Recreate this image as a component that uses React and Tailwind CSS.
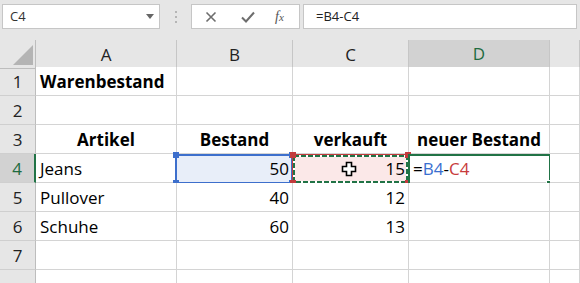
import React from 'react'

const COLS = ['A', 'B', 'C', 'D', '']
const GRID = 'grid grid-cols-[36px_141px_116px_116px_141px_30px]'

function Corner({ className }) {
  return <span className={`absolute w-[6px] h-[6px] ${className}`} />
}

function BodyCell({ children, className = '', align = 'left', bold = false }) {
  const alignCls = align === 'right' ? 'justify-end pr-[3px]' : align === 'center' ? 'justify-center' : 'justify-start pl-[4px]'
  return (
    <div className={`relative h-[29px] border-r border-b border-[#d4d4d4] flex items-end pb-[3px] leading-[20px] ${alignCls} ${bold ? 'font-bold' : ''} ${className}`}>
      {children}
    </div>
  )
}

function RowHead({ n, active }) {
  return (
    <div
      className={`h-[29px] flex items-end justify-center pb-[3px] leading-[20px] border-b border-[#cfcfcf] ${
        active ? 'bg-[#d2d2d2] text-[#1e6b3f] border-r-2 border-r-[#217346]' : 'bg-[#e6e6e6] text-[#222] border-r border-r-[#bdbdbd]'
      }`}
    >
      {n}
    </div>
  )
}

function Cursor() {
  return (
    <svg className="absolute left-[48px] top-[7px]" width="16" height="16" viewBox="0 0 16 16">
      <path d="M5.5 1.5h5v4h4v5h-4v4h-5v-4h-4v-5h4z" fill="#fff" stroke="#000" strokeWidth="1.6" />
    </svg>
  )
}

// row 8 only peeks in at the bottom edge, its number is hidden
const rows = [
  { n: 1, a: 'Warenbestand', aBold: true },
  { n: 2 },
  { n: 3, a: 'Artikel', b: 'Bestand', c: 'verkauft', d: 'neuer Bestand', header: true },
  { n: 4, a: 'Jeans', b: '50', c: '15', active: true },
  { n: 5, a: 'Pullover', b: '40', c: '12' },
  { n: 6, a: 'Schuhe', b: '60', c: '13' },
  { n: 7 },
  { n: 8, hideNum: true },
]

export default function App() {
  return (
    <div className="w-[580px] h-[283px] overflow-hidden bg-[#e6e6e6] text-[17px] text-black" style={{ fontFamily: '"Open Sans", "Noto Sans", sans-serif' }}>
      {/* Formula bar */}
      <div className="h-[40px] flex items-start pt-[4px]">
        <div className="ml-[2px] w-[158px] h-[25px] bg-white border border-[#c6c6c6] flex items-center justify-between pl-[7px] pr-[5px] text-[13px] text-[#333]">
          <span>C4</span>
          <svg width="8" height="5" viewBox="0 0 8 5"><path d="M0 0h8L4 5z" fill="#666" /></svg>
        </div>
        <div className="w-[31px] h-[25px] flex flex-col items-center justify-center gap-[3px]">
          <span className="w-[2px] h-[2px] bg-[#b5b5b5]" />
          <span className="w-[2px] h-[2px] bg-[#b5b5b5]" />
          <span className="w-[2px] h-[2px] bg-[#b5b5b5]" />
        </div>
        <div className="w-[109px] h-[25px] bg-white border border-[#c6c6c6] flex items-center text-[#6b6b6b]">
          <svg className="ml-[13px]" width="12" height="12" viewBox="0 0 12 12">
            <path d="M1.5 1.5l9 9M10.5 1.5l-9 9" stroke="#6d6d6d" strokeWidth="1.6" />
          </svg>
          <svg className="ml-[24px]" width="14" height="12" viewBox="0 0 14 12">
            <path d="M1 6.5l4 4L13 1.5" fill="none" stroke="#6d6d6d" strokeWidth="2" />
          </svg>
          <span className="ml-[20px] italic text-[14px] leading-none text-[#555]" style={{ fontFamily: '"Liberation Serif", serif' }}>
            f<span className="text-[11px]">x</span>
          </span>
        </div>
        <div className="ml-[3px] w-[274px] h-[25px] bg-white border border-[#c6c6c6] flex items-center pl-[12px] text-[13px] text-[#222]">
          =B4-C4
        </div>
      </div>

      {/* Column headers */}
      <div className={`${GRID} h-[27px]`}>
        <div className="relative border-r border-b border-[#bdbdbd]">
          <svg className="absolute left-[13px] top-[5px]" width="20" height="20" viewBox="0 0 20 20"><path d="M20 0v20H0z" fill="#b4b4b4" /></svg>
        </div>
        {COLS.map((c, i) => (
          <div
            key={i}
            className={`flex items-center justify-center pt-[1px] ${
              c === 'D' ? 'bg-[#d2d2d2] text-[#1e6b3f] border-r border-r-[#c6c6c6] border-b-2 border-b-[#217346]' : 'border-r border-[#c6c6c6] border-b border-b-[#bdbdbd] text-[#222]'
            }`}
          >
            {c}
          </div>
        ))}
      </div>

      {/* Body */}
      {rows.map((r) => (
        <div key={r.n} className={GRID}>
          <RowHead n={r.hideNum ? '' : r.n} active={r.active} />
          <BodyCell bold={r.header || r.aBold} align={r.header ? 'center' : 'left'} className="bg-white">
            {r.a}
          </BodyCell>
          <BodyCell bold={r.header} align={r.header ? 'center' : 'right'} className={r.active ? 'bg-[#e8eef9]' : 'bg-white'}>
            {r.b}
            {r.active && (
              <div className="absolute -left-[2px] top-0 w-[118px] h-[30px] border-2 border-[#3d6fcc]">
                <Corner className="-left-[4px] -top-[4px] bg-[#3d6fcc]" />
                <Corner className="-right-[4px] -top-[4px] bg-[#3d6fcc]" />
                <Corner className="-left-[4px] -bottom-[4px] bg-[#3d6fcc]" />
                <Corner className="-right-[4px] -bottom-[4px] bg-[#3d6fcc]" />
              </div>
            )}
          </BodyCell>
          <BodyCell bold={r.header} align={r.header ? 'center' : 'right'} className={r.active ? 'bg-[#fbe8e8]' : 'bg-white'}>
            {r.active && <Cursor />}
            <span className="relative">{r.c}</span>
            {r.active && (
              <div className="absolute -left-[1px] top-0 w-[117px] h-[30px] border border-[#c23b3d]">
                <svg className="absolute left-0 top-0" width="115" height="28" viewBox="0 0 115 28">
                  <rect x="1" y="1" width="113" height="26" fill="none" stroke="#fff" strokeWidth="2" />
                  <rect x="1" y="1" width="113" height="26" fill="none" stroke="#217346" strokeWidth="2" strokeDasharray="5 2" />
                </svg>
                <Corner className="-left-[3px] -top-[3px] w-[5px] h-[5px] bg-[#c23b3d]" />
                <Corner className="-right-[3px] -top-[3px] w-[5px] h-[5px] bg-[#c23b3d]" />
                <Corner className="-left-[3px] -bottom-[3px] w-[5px] h-[5px] bg-[#c23b3d]" />
                <Corner className="-right-[3px] -bottom-[3px] w-[5px] h-[5px] bg-[#c23b3d]" />
              </div>
            )}
          </BodyCell>
          <BodyCell bold={r.header} align={r.header ? 'center' : 'left'} className="bg-white">
            {r.header && r.d}
            {r.active && (
              <>
                <span className="relative">
                  =<span className="text-[#3a6fd0]">B4</span>-<span className="text-[#c83c3c]">C4</span>
                </span>
                <div className="absolute -left-[1px] top-0 w-[143px] h-[31px] border-2 border-[#217346]">
                  <span className="absolute -right-[4px] -bottom-[4px] w-[6px] h-[6px] bg-[#217346] outline outline-1 outline-white" />
                </div>
              </>
            )}
          </BodyCell>
          <BodyCell className="bg-white" />
        </div>
      ))}
    </div>
  )
}
